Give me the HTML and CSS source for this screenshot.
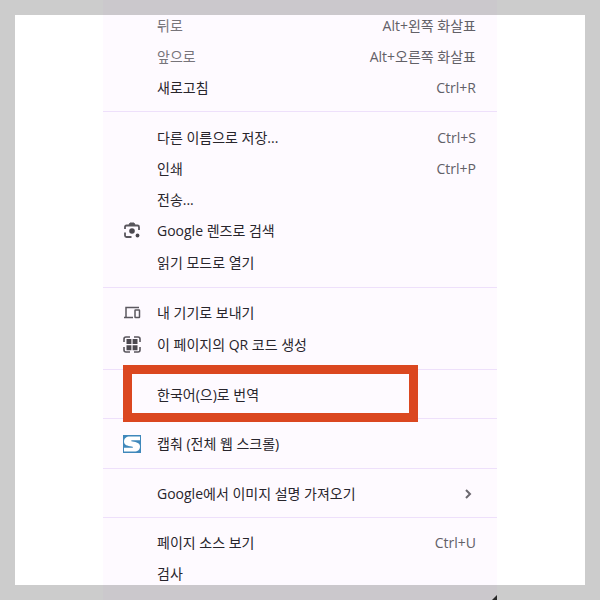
FILE: index.html
```html
<!DOCTYPE html>
<html lang="ko">
<head>
    <meta charset="UTF-8">
    <meta name="viewport" content="width=device-width, initial-scale=1.0">
    <title>한국어(으)로 번역</title>
    <link rel="stylesheet" href="styles.css">
</head>
<body>
    <main class="menu">
        <div class="group group-first">
            <button class="item" disabled><span>뒤로</span><kbd>Alt+왼쪽 화살표</kbd></button>
            <button class="item" disabled><span>앞으로</span><kbd>Alt+오른쪽 화살표</kbd></button>
            <button class="item"><span>새로고침</span><kbd>Ctrl+R</kbd></button>
        </div>
        <div class="group group-page">
            <button class="item"><span>다른 이름으로 저장...</span><kbd>Ctrl+S</kbd></button>
            <button class="item"><span>인쇄</span><kbd>Ctrl+P</kbd></button>
            <button class="item"><span>전송...</span></button>
            <button class="item tall">
                <svg class="icon" viewBox="0 0 18 18" fill="none" stroke="#59565d" stroke-width="1.800">
                    <path d="M2 7V5Q2 3.500 3.500 3.500H14.500Q16 3.500 16 5V8M2 10.500V13.500Q2 15 3.500 15H8.500"/>
                    <path d="M6 3 7 1H11L12 3Z" fill="#59565d" stroke-width="1"/>
                    <circle cx="9" cy="9" r="2.800" fill="#4b484f" stroke="none"/>
                    <circle cx="14.500" cy="13.500" r="1.900" fill="#4b484f" stroke="none"/>
                </svg>
                <span>Google 렌즈로 검색</span>
            </button>
            <button class="item tall"><span>읽기 모드로 열기</span></button>
        </div>
        <div class="group">
            <button class="item tall">
                <svg class="icon" viewBox="0 0 18 18" fill="none" stroke="#5b585f" stroke-width="1.500">
                    <path d="M3 13V3.500H16M1 13.500H10"/>
                    <rect x="12" y="6" width="4.500" height="7.500" rx=".5"/>
                </svg>
                <span>내 기기로 보내기</span>
            </button>
            <button class="item tall">
                <svg class="icon" viewBox="0 0 18 18" fill="none" stroke="#59565d" stroke-width="1.600">
                    <path d="M1 6V3Q1 1 3 1H7M11 1H15Q17 1 17 3V6M17 11V14Q17 16 15 16H11M7 16H3Q1 16 1 14V11"/>
                    <path d="M3.500 3H8.400V8H3.500ZM9.600 3H14.500V8H9.600ZM3.500 9.200H8.400V14.200H3.500ZM9.600 9.200H14.500V14.200H9.600Z" fill="#4b484f" stroke="none"/>
                </svg>
                <span>이 페이지의 QR 코드 생성</span>
            </button>
        </div>
        <div class="group marked">
            <button class="item"><span>한국어(으)로 번역</span></button>
        </div>
        <div class="group">
            <button class="item tall">
                <svg class="icon" viewBox="0 0 18 18">
                    <path d="M0 0H18V18H0Z" fill="#3f88bb"/>
                    <path d="M17 1.500H7C3 1.500 1 3.500 1 6.500C1 10 4.500 11 8.500 11.500C10.500 11.800 10.500 12.800 8.500 12.800H1V16.500H11C15 16.500 17 14.500 17 11.500C17 8 13.500 7 9.500 6.500C7.500 6.200 7.500 5.200 9.500 5.200H17Z" fill="#fff"/>
                </svg>
                <span>캡춰 (전체 웹 스크롤)</span>
            </button>
        </div>
        <div class="group">
            <button class="item">
                <span>Google에서 이미지 설명 가져오기</span>
                <svg class="arrow" viewBox="0 0 8 10" fill="none" stroke="#6b686f" stroke-width="2"><path d="M2 1 6 5 2 9"/></svg>
            </button>
        </div>
        <div class="group">
            <button class="item"><span>페이지 소스 보기</span><kbd>Ctrl+U</kbd></button>
            <button class="item"><span>검사</span></button>
        </div>
    </main>
    <div class="frame"></div>
</body>
</html>
```
FILE: styles.css
```css
* {
    box-sizing: border-box;
}
body {
    margin: 0;
    background-color: #fff;
    font-family: "Open Sans", "Noto Sans CJK KR", sans-serif;
}
.menu {
    position: relative;
    max-width: 394px;
    min-height: 100vh;
    margin: 0 auto;
    background-color: #fefaff;
}
/* shadow left at the rounded lower corner */
.menu::after {
    content: "";
    position: absolute;
    right: 0;
    bottom: 0;
    border-left: 5px solid transparent;
    border-bottom: 5px solid #333;
}
.group {
    padding: 9px 0 8px;
    border-bottom: 1px solid #eee0fb;
}
.group-first,
.group-page {
    padding-top: 10px;
}
.group:last-child {
    border-bottom: none;
    padding-bottom: 0;
}
.item {
    position: relative;
    display: flex;
    align-items: center;
    justify-content: space-between;
    width: 100%;
    height: 31px;
    padding: 0 21px 0 54px;
    border: none;
    background: none;
    color: #28252c;
    font: inherit;
    font-size: 14px;
    line-height: 20px;
    text-align: left;
    white-space: nowrap;
}
.tall {
    height: 32px;
}
.item:disabled {
    color: #77747a;
}
.item kbd {
    font: inherit;
    color: #626067;
}
.icon {
    position: absolute;
    left: 20px;
    width: 18px;
    height: 18px;
}
.arrow {
    width: 8px;
    height: 10px;
    margin-right: 4px;
}
.marked {
    position: relative;
}
.marked::after {
    content: "";
    position: absolute;
    top: -5px;
    bottom: -4px;
    left: 20px;
    right: 79px;
    border: 9px solid #db4720;
    z-index: 1;
}
.frame {
    position: fixed;
    inset: 0;
    border: 15px solid rgba(0, 0, 0, 0.2);
    pointer-events: none;
}
```
